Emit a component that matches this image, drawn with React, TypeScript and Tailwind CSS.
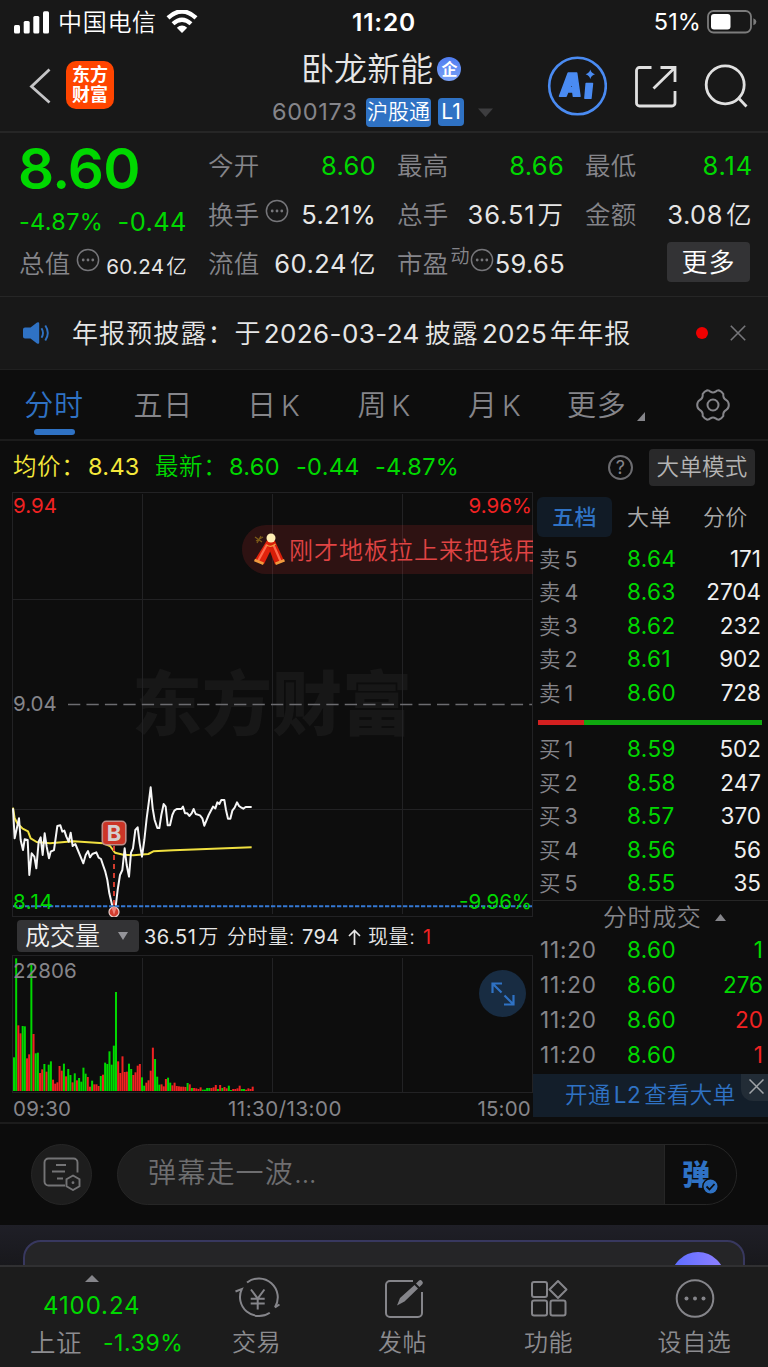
import React from 'react';

const UP = 'text-[#f02222]';
const DOWN = 'text-[#00d800]';

const sellOrders = [
  { label: '卖5', price: '8.64', qty: '171' },
  { label: '卖4', price: '8.63', qty: '2704' },
  { label: '卖3', price: '8.62', qty: '232' },
  { label: '卖2', price: '8.61', qty: '902' },
  { label: '卖1', price: '8.60', qty: '728' },
];

const buyOrders = [
  { label: '买1', price: '8.59', qty: '502' },
  { label: '买2', price: '8.58', qty: '247' },
  { label: '买3', price: '8.57', qty: '370' },
  { label: '买4', price: '8.56', qty: '56' },
  { label: '买5', price: '8.55', qty: '35' },
];

const ticks = [
  { time: '11:20', price: '8.60', qty: '1', color: DOWN },
  { time: '11:20', price: '8.60', qty: '276', color: DOWN },
  { time: '11:20', price: '8.60', qty: '20', color: UP },
  { time: '11:20', price: '8.60', qty: '1', color: UP },
];

// g = 跌, r = 涨, 数字为柱高 (1/3 px)
const volumes =
  'g101 g398 r197 r173 g195 g194 r98 r110 g381 r171 g113 g115 r54 r65 g81 r58 g79 g89 r34 r22 r26 r75 r61 g82 r44 g66 g48 r26 g53 r32 g39 g28 g70 g52 r42 r13 g31 r20 r20 r15 g45 r49 g85 g81 g119 g79 g136 g297 r89 r54 r104 r57 r58 g82 g66 r48 r56 r76 r81 g41 g16 r25 r32 r61 r130 g96 g43 g19 r20 r14 r36 g40 g25 r17 r25 r15 r14 r13 r13 r12 g24 r20 g9 r9 r8 r6 r11 g4 g4 g9 g9 r9 r11 r18 g6 r18 g9 r12 r8 g16 g3 r6 r6 r8 r16 g6 g6 r4 r8 r6 r13'.split(' ');

const pricePoints =
  '39,205 44,295 57,235 62,300 69,330 74,298 83,300 88,405 95,340 103,350 109,385 116,305 122,292 128,345 134,280 140,320 147,355 152,335 162,330 172,258 181,256 187,275 193,272 199,290 206,305 212,278 218,318 226,312 250,370 257,345 264,333 270,352 277,342 289,337 296,353 303,357 309,375 316,395 322,420 328,460 334,485 341,515 347,500 353,450 360,405 367,390 374,325 380,375 387,410 393,338 399,325 406,270 413,262 419,310 426,350 433,300 440,235 446,190 452,142 458,205 464,240 472,264 478,264 484,225 491,192 497,200 503,256 510,256 517,225 523,212 530,207 544,207 549,200 555,220 562,220 568,228 575,220 581,207 587,222 600,226 607,235 613,257 626,225 639,200 646,205 652,187 658,192 664,180 673,180 678,210 684,236 691,236 697,212 704,203 711,187 717,198 723,202 730,206 737,201 755,201';

const avgPoints =
  '39,203 44,235 52,250 60,258 68,266 84,274 92,295 110,306 150,310 220,304 310,310 330,318 345,338 370,344 400,346 445,342 460,334 520,331 600,328 755,322';

const MoreDots = () => (
  <svg className="w-6 h-6 shrink-0" viewBox="0 0 24 24" fill="none">
    <circle cx="12" cy="12" r="10.6" stroke="#76767a" strokeWidth="1.5" />
    <g fill="#76767a">
      <circle cx="7.2" cy="12" r="1.4" />
      <circle cx="12" cy="12" r="1.4" />
      <circle cx="16.8" cy="12" r="1.4" />
    </g>
  </svg>
);

const StatusBar = () => (
  <div className="relative h-11 flex items-center pl-[14px] pr-[11px] text-white">
    <svg className="w-[35px] h-[23px]" viewBox="0 0 35 23" fill="#fff">
      <rect x="0" y="14" width="6" height="8.5" rx="1.5" />
      <rect x="9.7" y="10" width="6" height="12.5" rx="1.5" />
      <rect x="19.3" y="5" width="6" height="17.5" rx="1.5" />
      <rect x="29" y="0.3" width="6" height="22.2" rx="1.5" />
    </svg>
    <span className="ml-[9px] w-[108px] pt-px text-[24px] tracking-[0.7px] font-[350]">中国电信</span>
    <svg className="w-[32px] h-[24px]" viewBox="0 0 32 24">
      <path d="M2 7.8Q16-4.8 30 7.8" fill="none" stroke="#fff" strokeWidth="4.4" />
      <path d="M7 13.8Q16 5.6 25 13.8" fill="none" stroke="#fff" strokeWidth="4.2" />
      <path d="M10.8 17.8Q16 13.2 21.2 17.8L16 23Z" fill="#fff" />
    </svg>
    <span className="absolute left-1/2 -translate-x-1/2 text-[24.5px] font-semibold tracking-[0.8px]">11:20</span>
    <span className="ml-auto mr-[6px] text-[23.5px] tracking-[0.1px]">51%</span>
    <svg className="w-[50px] h-[24px]" viewBox="0 0 50 24" fill="none">
      <rect x="1" y="1" width="43" height="21.5" rx="5.5" stroke="#7c7c7c" strokeWidth="1.8" />
      <rect x="4" y="4" width="19.5" height="15.5" rx="3" fill="#fff" />
      <path d="M46.4 8.3q3 1.2 3 3.5t-3 3.5z" fill="#7c7c7c" />
    </svg>
  </div>
);

const Header = () => (
  <header className="h-[89px] flex border-b-2 border-[#262626]">
    <div className="w-[260px] pt-[17px] pl-[29px] flex items-start">
      <svg className="w-[22px] h-[36px] mt-[7px]" viewBox="0 0 22 36" fill="none">
        <path d="M20.5 1.5L2.5 18.5 20.5 34.5" stroke="#c4c4c6" strokeWidth="2.8" />
      </svg>
      <div className="ml-[15px] w-12 h-12 rounded-[10px] bg-[#ff4500] text-white font-bold text-[18px] leading-[20px] flex flex-col items-center justify-center">
        <span>东方</span>
        <span>财富</span>
      </div>
    </div>
    <div className="w-[246px] flex flex-col">
      <div className="h-[50px] pl-[41px] flex items-center">
        <span className="pt-px text-[33px] font-[350] text-[#e6e6e6] tracking-[0.1px]">卧龙新能</span>
        <span className="ml-[4px] w-6 h-6 rounded-full bg-gradient-to-b from-[#4f7cf0] to-[#7ba2f6] flex items-center justify-center text-white text-[16px] font-bold">企</span>
      </div>
      <div className="h-[36px] pl-[12px] flex items-center">
        <span className="w-[94px] text-[23.5px] text-[#85858a] tracking-[0.7px]">600173</span>
        <span className="w-[65px] h-[29px] rounded-[4px] bg-[#2f72c4] text-white text-[21px] font-[350] flex items-center justify-center">沪股通</span>
        <span className="ml-[7px] w-[26px] h-[28px] rounded-[4px] bg-[#2f72c4] text-white text-[21px] flex items-center justify-center">L1</span>
        <svg className="ml-[14px] w-[15px] h-[9px]" viewBox="0 0 15 9">
          <path d="M0 0.5h15L7.5 9z" fill="#3d3d3f" />
        </svg>
      </div>
    </div>
    <div className="flex-1 pl-[41px] pt-[12px] flex items-start">
      <svg className="w-[60px] h-[60px]" viewBox="0 0 60 60">
        <circle cx="30.5" cy="30" r="28.3" fill="none" stroke="#4a8bf2" strokeWidth="2.6" />
        <path fillRule="evenodd" fill="#4a8bf2" stroke="#4a8bf2" strokeWidth="1.500" strokeLinejoin="round" d="M21.200 17h8.500L33 40.300h-6.600l-.6-4.300h-5l-1.700 4.300h-6.600zM25 26.500l-2 5.300h2.800z" />
        <path fill="#4a8bf2" stroke="#4a8bf2" strokeWidth="1.500" strokeLinejoin="round" d="M39.200 27.400h6.300L43.900 42.300h-6z" />
        <path fill="#4a8bf2" d="M43.300 13.500q1 3.800 4.700 4.800-3.700 1-4.700 4.800-1-3.800-4.700-4.800 3.700-1 4.700-4.800z" />
      </svg>
      <svg className="ml-[27px] mt-[9px] w-[43px] h-[43px]" viewBox="0 0 43 43" fill="none" stroke="#e0e0e0" strokeWidth="2.8">
        <path d="M17.500 2.500H5.500a3 3 0 0 0-3 3v32.500a3 3 0 0 0 3 3h32.500a3 3 0 0 0 3-3V26" />
        <path d="M26.500 2.500H41v14.500M40.500 3L19.500 23.500" />
      </svg>
      <svg className="ml-[27px] mt-[8px] w-[44px] h-[44px]" viewBox="0 0 44 44" fill="none" stroke="#e0e0e0" strokeWidth="2.800">
        <circle cx="21.200" cy="20.800" r="19" />
        <path d="M34 33.500L42.500 42.500" />
      </svg>
    </div>
  </header>
);

const LABEL = 'text-[#85858a] font-[350] tracking-[0.2px]';

const Quote = () => (
  <section className="h-[164px] pl-5 pr-4 flex gap-[21px] text-[25.5px] text-[#e6e6e6] tracking-[0.3px] border-b border-[#262626]">
    <div className="w-[167px] pt-px flex flex-col">
      <div className={`h-[70px] -ml-[2px] pt-px flex items-center text-[56.5px] font-semibold tracking-[-0.8px] ${DOWN}`}>8.60</div>
      <div className={`h-[36px] -ml-px flex items-center justify-between ${DOWN}`}>
        <span className="text-[23.500px]">-4.87%</span>
        <span className="text-[25.500px] tracking-[0.4px]">-0.44</span>
      </div>
      <div className="h-[49px] -ml-px flex items-center">
        <span className={LABEL}>总值</span>
        <span className="ml-[6px] mb-[10px]"><MoreDots /></span>
        <span className="ml-auto mt-[6px] text-[20.500px] tracking-[0.300px]">60.24<span className="ml-[2px] font-[350]">亿</span></span>
      </div>
    </div>
    <div className="w-[168px] pt-[9px] flex flex-col">
      <div className="h-[49px] flex items-center justify-between">
        <span className={LABEL}>今开</span>
        <span className={DOWN}>8.60</span>
      </div>
      <div className="h-[49px] flex items-center">
        <span className={LABEL}>换手</span>
        <span className="ml-[6px] mb-[10px]"><MoreDots /></span>
        <span className="ml-auto">5.21%</span>
      </div>
      <div className="h-[49px] flex items-center justify-between">
        <span className={LABEL}>流值</span>
        <span className="tracking-[0.500px]">60.24<span className="ml-[3px] font-[350]">亿</span></span>
      </div>
    </div>
    <div className="w-[167px] pt-[9px] flex flex-col">
      <div className="h-[49px] flex items-center justify-between">
        <span className={LABEL}>最高</span>
        <span className={DOWN}>8.66</span>
      </div>
      <div className="h-[49px] flex items-center justify-between">
        <span className={LABEL}>总手</span>
        <span className="tracking-[0.900px]">36.51<span className="ml-[2px] font-[350]">万</span></span>
      </div>
      <div className="h-[49px] flex items-center">
        <span className={LABEL}>市盈</span>
        <span className={`ml-[2px] mb-[14px] text-[19px] ${LABEL}`}>动</span>
        <span className="mb-[10px]"><MoreDots /></span>
        <span className="ml-auto -mr-px">59.65</span>
      </div>
    </div>
    <div className="w-[167px] pt-[9px] flex flex-col">
      <div className="h-[49px] flex items-center justify-between">
        <span className={LABEL}>最低</span>
        <span className={`-mr-px tracking-[0.800px] ${DOWN}`}>8.14</span>
      </div>
      <div className="h-[49px] flex items-center justify-between">
        <span className={LABEL}>金额</span>
        <span className="tracking-[0.500px]">3.08<span className="ml-[3px] font-[350]">亿</span></span>
      </div>
      <div className="h-[45px] pr-[2px] flex items-center justify-end">
        <button className="w-[83px] h-10 -mt-px rounded-[4px] bg-[#333335] text-[26px] font-[350] text-white tracking-[1px]">更多</button>
      </div>
    </div>
  </section>
);

const Notice = () => (
  <section className="h-[73px] pl-[23px] flex items-center text-[#e6e6e6] border-b border-[#202020]">
    <svg className="w-[27px] h-[24px]" viewBox="0 0 27 24" fill="none">
      <path d="M2 6.500h5.500L14 1.500q2.200-1 2.200 1v19q0 2-2.200 1L7.500 17.500H2q-2 0-2-2v-7q0-2 2-2z" fill="#2f72c4" />
      <path d="M18.500 7.200q3 4.800 0 9.600M22.300 4.500q5 7.500 0 15" stroke="#2f72c4" strokeWidth="1.900" />
    </svg>
    <span className="ml-[22px] text-[26px] font-[350] tracking-[1.100px]">年报预披露：于</span>
    <span className="ml-[2px] text-[26px] tracking-[0.400px]">2026-03-24</span>
    <span className="ml-[5px] text-[26px] font-[350] tracking-[1.100px]">披露</span>
    <span className="ml-[3px] text-[26px] tracking-[0.300px]">2025</span>
    <span className="ml-[3px] text-[26px] font-[350] tracking-[1.100px]">年年报</span>
    <span className="ml-auto w-3 h-3 rounded-full bg-[#ee0000]" />
    <svg className="ml-[22px] mr-[22px] w-4 h-4" viewBox="0 0 16 16">
      <path d="M.800.800L15.200 15.200M15.200.800L.800 15.200" stroke="#76767a" strokeWidth="1.600" />
    </svg>
  </section>
);

const periods = ['五日', '日K', '周K', '月K'];

const Tabs = () => (
  <nav className="h-[71px] flex items-center bg-[#0d0d0d] border-b-2 border-[#1c1c1c] text-[29px] font-[350] text-[#85858a] tracking-[0.800px]">
    <div className="relative w-[108px] h-full pt-[3px] flex items-center justify-center text-[#2f72c4]">
      分时
      <span className="absolute bottom-[4px] left-[34px] w-[41px] h-[6px] rounded-full bg-[#2f72c4]" />
    </div>
    {periods.map((name) => (
      <div key={name} className="w-[110.500px] pt-[3px] flex items-center justify-center">
        {name.charAt(0)}
        <span className={name.endsWith('K') ? 'ml-[4px]' : ''}>{name.charAt(1)}</span>
      </div>
    ))}
    <div className="ml-[17px] w-[80px] pt-[3px] flex items-center">
      更多
      <svg className="ml-[10px] mt-[20px] w-[8px] h-[9px] shrink-0" viewBox="0 0 8 9">
        <path d="M8 0v9H0z" fill="#85858a" />
      </svg>
    </div>
    <svg className="ml-[49px] w-[34px] h-[34px]" viewBox="0 0 34 34" fill="none" stroke="#85858a" strokeWidth="2">
      <path d="M11.300 2.300Q13.200 2.300 14.500 3.700Q17 5.400 19.500 3.700Q20.800 2.300 22.700 2.300Q25.800 3.500 27.300 6Q26.800 10.200 30.200 12Q32.800 13.600 32.800 17Q32.800 20.400 30.200 22Q26.800 23.800 27.300 28Q25.800 30.500 22.700 31.700Q20.800 31.700 19.500 30.300Q17 28.600 14.500 30.300Q13.200 31.700 11.300 31.700Q8.200 30.500 6.700 28Q7.200 23.800 3.800 22Q1.200 20.400 1.200 17Q1.200 13.600 3.800 12Q7.200 10.200 6.700 6Q8.200 3.500 11.300 2.300Z" />
      <circle cx="17" cy="17" r="5.500" />
    </svg>
  </nav>
);

const InfoLine = () => (
  <div className="h-[50px] pt-[2px] pl-[13px] pr-[13px] flex items-center bg-[#0d0d0d] text-[23.500px] tracking-[0.300px]">
    <span className="w-[75px] font-[350] text-[#f5e83b] tracking-[0.600px]">均价：</span>
    <span className="w-[67px] text-[#f5e83b]">8.43</span>
    <span className={`w-[74px] font-[350] tracking-[0.600px] ${DOWN}`}>最新：</span>
    <span className={`w-[67px] ${DOWN}`}>8.60</span>
    <span className={`w-[79px] ${DOWN}`}>-0.44</span>
    <span className={DOWN}>-4.87%</span>
    <span className="ml-auto w-[25px] h-[25px] rounded-full border-2 border-[#6c6c70] text-[#85858a] text-[18px] flex items-center justify-center">?</span>
    <button className="ml-[16px] w-[106px] h-[37px] rounded-[4px] bg-[#29292a] text-[#b4b4b4] text-[22.500px] font-[350]">大单模式</button>
  </div>
);

const PriceChart = () => (
  <div className="relative h-[426px] text-[20.500px] leading-[24px]">
    <div className="absolute left-[120px] top-[169px] text-[70px] leading-[90px] font-black text-[#171717]">东方财富</div>
    <svg className="absolute inset-0 w-[521px] h-[426px]" viewBox="12 491 521 426" fill="none">
      <path d="M12 492.500H533M12 599.500H533M12 809.500H533M12 916.500H533M12.500 492V916M142.500 494V914M272.500 494V914M402.500 494V914M532.500 492V916" stroke="#222224" />
      <path d="M68 704.500H532" stroke="#6c6c70" strokeWidth="1.500" strokeDasharray="12.300 6.150" />
      <g transform="translate(0 740) scale(.33333)" strokeLinejoin="round">
        <polyline points={avgPoints} stroke="#f0e040" strokeWidth="6" />
        <polyline points={pricePoints} stroke="#f6f6f6" strokeWidth="6" />
      </g>
      <path d="M13 906.300H532" stroke="#3478d4" strokeWidth="2" strokeDasharray="4.300 1.700" />
      <path d="M114 846V905" stroke="#d23c2e" strokeWidth="2" strokeDasharray="5 4" />
      <circle cx="114" cy="912" r="5" fill="#d23c2e" stroke="#e8cfcb" strokeWidth="1.200" />
      <path d="M111.500 907.500L114 915L116.500 907.500Z" fill="#f0857b" />
      <rect x="102.300" y="821.300" width="23.500" height="23.500" rx="4" fill="#cc3527" stroke="#c08d88" strokeWidth="1.600" />
    </svg>
    <span className="absolute left-[90px] top-[330px] w-6 text-center text-[22px] font-bold text-[#d5cfcf]">B</span>
    <span className={`absolute left-px top-[3px] ${UP}`}>9.94</span>
    <span className={`absolute right-[1px] top-[3px] ${UP}`}>9.96%</span>
    <span className="absolute left-px top-[201px] text-[#85858a]">9.04</span>
    <span className={`absolute left-px top-[399px] tracking-[0.600px] ${DOWN}`}>8.14</span>
    <span className={`absolute right-[1px] top-[399px] ${DOWN}`}>-9.96%</span>
    <div className="absolute left-[230px] right-0 top-[34px] h-[49px] rounded-l-full bg-[#e03030]/16 overflow-hidden flex items-center whitespace-nowrap">
      <svg className="ml-[11px] w-[32px] h-[34px] shrink-0" viewBox="0 0 32 34">
        <path d="M2 4l7 5M8 3l-4 7M3 8l7-4" stroke="#7c5a18" strokeWidth="1.300" />
        <path d="M14.500 6.500l6.500 4L11 31 1.500 27.500z" fill="#e2230c" />
        <path d="M14.500 11.500L21.500 7 31 27.500 22 31.500z" fill="#d81e08" />
        <path d="M14 11.500L5 28M20.500 12L27.500 28" stroke="#ff6a4c" strokeWidth="2.200" />
        <path d="M1.500 27l9 3.700M22.500 30.700l9-3.500" stroke="#f19a3e" strokeWidth="2.600" />
        <path d="M13.500 12q5 3 9-1" stroke="#f19a3e" strokeWidth="1.200" fill="none" />
        <circle cx="18" cy="5" r="4.500" fill="#ffeeb4" />
      </svg>
      <span className="ml-[4px] pt-[2px] text-[24px] font-[350] text-[#e04444] tracking-[1.000px]">刚才地板拉上来把钱用</span>
    </div>
  </div>
);

const VolumeChart = () => (
  <div className="relative h-[138px]">
    <svg className="absolute inset-0 w-[521px] h-[138px]" viewBox="12 956 521 138" fill="none">
      <path d="M12 956.500H533M12 1093.500H533M12.500 956V1093M142.500 959V1093M272.500 959V1093M402.500 959V1093M532.500 956V1093" stroke="#222224" />
      {volumes.map((v, i) => {
        const h = Number(v.slice(1)) / 3;
        return <rect key={i} x={13 + i * 2.17} y={1092 - h} width="2" height={h} fill={v[0] === 'g' ? '#00d800' : '#f02222'} />;
      })}
    </svg>
    <span className="absolute left-px top-[4px] text-[20.500px] leading-[24px] text-[#85858a] tracking-[0.100px]">22806</span>
    <div className="absolute left-[467px] top-[15px] w-[47px] h-[47px] rounded-full bg-[#182c42] flex items-center justify-center">
      <svg className="w-6 h-6" viewBox="0 0 24 24" fill="none" stroke="#2f72c4" strokeWidth="2.200">
        <path d="M1.500 11V1.500H11M2 2l8.500 8.500M22.500 13v9.500H13M22 22l-8.500-8.500" />
      </svg>
    </div>
  </div>
);

const ChartColumn = () => (
  <div className="w-[521px] flex flex-col">
    <PriceChart />
    <div className="h-[39px] pt-[2px] pl-[5px] flex items-center text-[20px] text-[#e6e6e6] whitespace-nowrap">
      <button className="w-[122px] h-[32px] -mt-px rounded-[4px] bg-[#333335] pl-[8px] flex items-center text-[25px] font-[350] text-[#f0f0f0]">
        成交量
        <svg className="ml-[18px] w-[10px] h-[8px]" viewBox="0 0 10 8">
          <path d="M0 0h10L5 8z" fill="#95959a" />
        </svg>
      </button>
      <span className="ml-[5px] w-[83px] tracking-[0.500px]">36.51<span className="ml-[2px] font-[350]">万</span></span>
      <span className="w-[75px] font-[350] tracking-[0.600px]">分时量:</span>
      <span className="w-[46px] tracking-[0.300px]">794</span>
      <svg className="w-[13px] h-[16px] mr-[7px]" viewBox="0 0 13 16" fill="none" stroke="#e6e6e6" strokeWidth="1.700">
        <path d="M6.500 16V1.500M1 7l5.500-5.500L12 7" />
      </svg>
      <span className="w-[55px] font-[350] tracking-[0.600px]">现量:</span>
      <span className={UP}>1</span>
    </div>
    <VolumeChart />
    <div className="h-[29px] pt-[4px] pl-px pr-[2px] flex items-center text-[20.500px] text-[#85858a] tracking-[0.200px]">
      <span className="w-[215px]">09:30</span>
      <span className="tracking-[0.500px]">11:30/13:00</span>
      <span className="ml-auto">15:00</span>
    </div>
  </div>
);

const OrderRow = ({ label, price, qty }: { label: string; price: string; qty: string }) => (
  <div className="h-[33.500px] pl-[6px] pr-[7px] flex items-center text-[22.500px]">
    <span className="w-[88px] text-[#85858a] text-[21.500px]">
      <span className="font-[350]">{label.charAt(0)}</span>
      <span className="ml-[4px]">{label.charAt(1)}</span>
    </span>
    <span className={`tracking-[0.400px] ${DOWN}`}>{price}</span>
    <span className="ml-auto text-[#f0f0f0]">{qty}</span>
  </div>
);

const OrderBook = () => (
  <div className="w-[235px] flex flex-col">
    <div className="mt-[6px] h-[40px] ml-[4px] flex items-center text-[22px] font-[350] text-[#a8a8a8] tracking-[0.200px]">
      <span className="w-[75px] h-full rounded-[6px] bg-[#111b26] text-[#2f72c4] font-medium flex items-center justify-center">五档</span>
      <span className="ml-[15px] w-[76px]">大单</span>
      <span>分价</span>
    </div>
    <div className="mt-[5px] h-[167.500px]">
      {sellOrders.map((o) => <OrderRow key={o.label} {...o} />)}
    </div>
    <div className="ml-[5px] mr-[6px] mt-[10.500px] h-[5px] flex">
      <span className="w-[46px] bg-[#d42020]" />
      <span className="flex-1 bg-[#0fa80f]" />
    </div>
    <div className="mt-[7.500px] h-[167.500px]">
      {buyOrders.map((o) => <OrderRow key={o.label} {...o} />)}
    </div>
    <div className="h-[33px] border-t border-[#262626] flex items-center pt-px pl-[70px] text-[24px] font-[350] text-[#85858a] tracking-[0.600px]">
      分时成交
      <svg className="ml-[14px] w-[11px] h-[7px]" viewBox="0 0 11 7">
        <path d="M0 7h11L5.500 0z" fill="#85858a" />
      </svg>
    </div>
    {ticks.map((t, i) => (
      <div key={i} className="h-[35px] pb-px pl-[7px] pr-[5px] flex items-center text-[22.500px]">
        <span className="w-[87px] text-[#85858a] tracking-[0.800px]">{t.time}</span>
        <span className={`tracking-[0.400px] ${DOWN}`}>{t.price}</span>
        <span className={`ml-auto ${t.color}`}>{t.qty}</span>
      </div>
    ))}
    <div className="relative mt-px h-[43px] pb-[2px] bg-[#131e2a] flex items-center pl-[32px] text-[22.500px] font-[350] text-[#2f72c4] tracking-[0.400px] whitespace-nowrap">
      开通<span className="ml-[3px] mr-[3px] font-normal">L2</span>查看大单
      <span className="absolute right-0 top-0 w-[27px] h-[27px] rounded-bl-[12px] bg-[#222c36] flex items-center justify-center">
        <svg className="w-[15px] h-[15px] ml-[3px] mb-[3px]" viewBox="0 0 15 15">
          <path d="M.500.500l14 14M14.500.500l-14 14" stroke="#a0a4a8" strokeWidth="1.500" />
        </svg>
      </span>
    </div>
  </div>
);

const CommentBar = () => (
  <div className="h-[103px] pl-[31px] pb-px flex items-center bg-[#0c0c0c] border-t-2 border-[#1c1c1c]">
    <div className="w-[61px] h-[61px] rounded-full bg-[#1d1d1d] border border-[#262626] flex items-center justify-center">
      <svg className="w-[38px] h-[34px]" viewBox="0 0 38 34" fill="none" stroke="#747476" strokeWidth="1.900">
        <path d="M22 28.500H5.500a4 4 0 0 1-4-4v-19a4 4 0 0 1 4-4h25a4 4 0 0 1 4 4v10" />
        <path d="M13 8h10M9 14.500h13M14 21.500h6" />
        <path d="M30 18.500l6.500 3.700v7L30 33l-6.500-3.800v-7z" />
        <circle cx="30" cy="25.700" r="1.400" fill="#747476" stroke="none" />
      </svg>
    </div>
    <div className="ml-[25px] w-[620px] h-[61px] rounded-full border border-[#262626] bg-[#1d1d1d] overflow-hidden flex items-center">
      <span className="pl-[30px] pb-[3px] flex-1 text-[28px] font-[350] text-[#6e6e70] tracking-[1.200px]">
        弹幕走一波<span className="tracking-[-0.500px]">...</span>
      </span>
      <div className="w-[72px] h-full bg-[#0d0d0d] border-l border-[#262626]">
        <div className="relative ml-[17px] mt-[11px] w-[38px] h-[40px] text-[28px] leading-[38px] font-black text-[#2f72c4]">
          弹
          <svg className="absolute left-[20px] top-[22px] w-[17px] h-[17px]" viewBox="0 0 17 17" fill="none">
            <circle cx="8.500" cy="8.500" r="7.700" fill="#2f72c4" stroke="#0d0d0d" strokeWidth="1.400" />
            <path d="M4.500 8.500l3 3 5-5.500" stroke="#0d0d0d" strokeWidth="1.800" />
          </svg>
        </div>
      </div>
    </div>
  </div>
);

const PromoCard = () => (
  <div className="h-[40px] pl-[23px] pr-[23px] pt-[15px] overflow-hidden bg-gradient-to-b from-[#1f1f27] to-[#18181c]">
    <div className="h-[60px] rounded-t-[18px] border-2 border-[#38385f] bg-[#252527] pt-[10px] pr-[18px] flex justify-end">
      <span className="w-[54px] h-[54px] rounded-full bg-gradient-to-r from-[#5a6cff] to-[#9080ff]" />
    </div>
  </div>
);

const NavItem = ({ label, children }: { label: string; children: React.ReactNode }) => (
  <div className="w-[146px] flex flex-col items-center">
    <svg className="mt-[12px] w-[46px] h-[40px] overflow-visible" viewBox="0 0 46 40" fill="none" stroke="#85858a" strokeWidth="2">
      {children}
    </svg>
    <span className="mt-[6px] text-[24px] leading-[36px] font-[350] text-[#8c8c90] tracking-[0.600px]">{label}</span>
  </div>
);

const BottomNav = () => (
  <nav className="h-[102px] flex bg-[#1c1c1c] border-t-2 border-[#303032]">
    <div className="w-[183.500px] flex flex-col items-center">
      <svg className="mt-[8px] w-[14px] h-[7px]" viewBox="0 0 14 7">
        <path d="M0 7h14L7 0z" fill="#85858a" />
      </svg>
      <span className={`mt-[6px] text-[24px] leading-[36px] tracking-[0.900px] ${DOWN}`}>4100.24</span>
      <div className="w-full pl-[30px] flex items-center text-[23px] leading-[36px]">
        <span className="w-[73px] pt-px text-[25.500px] font-[350] text-[#8c8c90] tracking-[0.600px]">上证</span>
        <span className={`tracking-[0.600px] ${DOWN}`}>-1.39%</span>
      </div>
    </div>
    <NavItem label="交易">
      <path d="M13 3.500A19 19 0 0 1 41 28.300L45.500 25.500" />
      <path d="M35.800 33.700A19 19 0 0 1 7.800 10L1.500 12.500" />
      <path d="M17 10.500l6.700 9 6.700-9M23.700 19.500v11M16.700 19.800h14M16.700 24.500h14" />
    </NavItem>
    <NavItem label="发帖">
      <path d="M33 2H10a4 4 0 0 0-4 4v28a4 4 0 0 0 4 4h28a4 4 0 0 0 4-4V13" />
      <path d="M34.500 6l3.500 3.500L24.500 22.500l-7.500 4 3-7.500zM36 4.500l3-3q1.500-1 3 .5t.5 3l-3 3z" fill="#85858a" stroke="none" />
    </NavItem>
    <NavItem label="功能">
      <rect x="6" y="3" width="15" height="15" rx="2" />
      <rect x="6" y="21.500" width="15" height="15" rx="2" />
      <rect x="24.500" y="21.500" width="15" height="15" rx="2" />
      <path d="M32 2l8.500 8.500L32 19l-8.500-8.500z" strokeLinejoin="round" />
    </NavItem>
    <NavItem label="设自选">
      <circle cx="23" cy="19.500" r="18.300" />
      <g fill="#85858a" stroke="none">
        <circle cx="14.500" cy="19.500" r="2" />
        <circle cx="23" cy="19.500" r="2" />
        <circle cx="31.500" cy="19.500" r="2" />
      </g>
    </NavItem>
  </nav>
);

const App: React.FC = () => {
  return (
    <div className="w-[768px] h-[1367px] overflow-hidden flex flex-col bg-[#181818] font-['Inter','Noto_Sans_CJK_SC',sans-serif]">
      <StatusBar />
      <Header />
      <Quote />
      <Notice />
      <Tabs />
      <InfoLine />
      <main className="h-[631px] pl-3 flex bg-[#0d0d0d]">
        <ChartColumn />
        <OrderBook />
      </main>
      <CommentBar />
      <PromoCard />
      <BottomNav />
    </div>
  );
};

export default App;
